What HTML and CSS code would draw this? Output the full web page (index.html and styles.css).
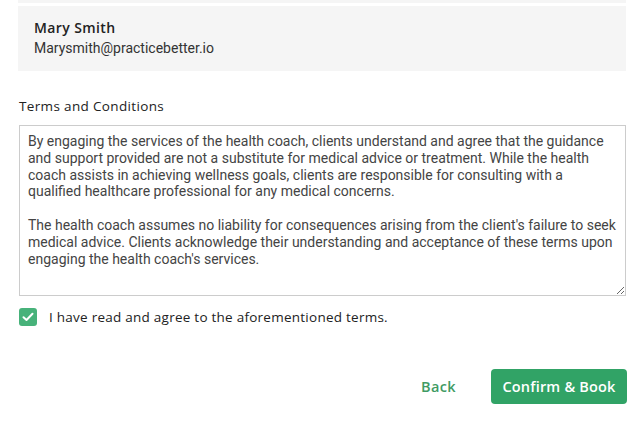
FILE: index.html
```html
<!DOCTYPE html>
<html>
<head>
<meta charset="utf-8">
<link rel="stylesheet" href="styles.css">
</head>
<body>
<div class="page">
  <div class="prev-card"></div>
  <div class="client-card">
    <div class="client-name">Mary Smith</div>
    <div class="client-email">Marysmith@practicebetter.io</div>
  </div>
  <div class="terms-label">Terms and Conditions</div>
  <textarea class="terms-box" readonly>By engaging the services of the health coach, clients understand and agree that the guidance and support provided are not a substitute for medical advice or treatment. While the health coach assists in achieving wellness goals, clients are responsible for consulting with a qualified healthcare professional for any medical concerns.

The health coach assumes no liability for consequences arising from the client's failure to seek medical advice. Clients acknowledge their understanding and acceptance of these terms upon engaging the health coach's services.</textarea>
  <label class="agree">
    <span class="check">
      <svg width="12" height="10" viewBox="0 0 12 10"><path d="M1.5 5.2 L4.5 8 L10.5 1.8" fill="none" stroke="#fff" stroke-width="2" stroke-linecap="round" stroke-linejoin="round"/></svg>
    </span>
    <span class="agree-text">I have read and agree to the aforementioned terms.</span>
  </label>
  <div class="actions">
    <button class="btn-back">Back</button>
    <button class="btn-confirm">Confirm &amp; Book</button>
  </div>
</div>
</body>
</html>
```
FILE: styles.css
```css
html, body {
  margin: 0;
  padding: 0;
  background: #ffffff;
}
.page {
  padding: 0 17px 0 18px;
  font-family: "Open Sans", "Noto Sans", sans-serif;
  color: #222;
}
.prev-card {
  height: 3px;
  background: #f5f5f5;
}
.client-card {
  margin-top: 3px;
  background: #f5f5f5;
  height: 65px;
  padding: 12px 16px 0 16px;
  box-sizing: border-box;
}
.client-name {
  font-size: 14px;
  font-weight: 600;
  color: #222;
  line-height: 20px;
  letter-spacing: 0.4px;
}
.client-email {
  font-family: Roboto, sans-serif;
  font-size: 14px;
  color: #333;
  margin-top: 2px;
  line-height: 17px;
}
.terms-label {
  margin-top: 26px;
  margin-left: 1px;
  font-size: 13.5px;
  color: #222;
  line-height: 18px;
  letter-spacing: 0.35px;
}
.terms-box {
  display: block;
  margin: 10px 0 0 1px;
  width: 607px;
  height: 171px;
  box-sizing: border-box;
  border: 1px solid #cccccc;
  border-radius: 0;
  padding: 7px 8px;
  font-family: Roboto, sans-serif;
  font-size: 14px;
  line-height: 16.8px;
  color: #444;
  resize: both;
  outline: none;
  overflow: hidden;
}
.agree {
  display: flex;
  align-items: center;
  margin-top: 12px;
  margin-left: 1px;
}
.check {
  width: 18px;
  height: 18px;
  border-radius: 3px;
  background: #47b27a;
  display: flex;
  align-items: center;
  justify-content: center;
}
.agree-text {
  margin-left: 12px;
  font-size: 13.5px;
  color: #222;
  letter-spacing: 0.25px;
}
.actions {
  display: flex;
  justify-content: flex-end;
  align-items: center;
  margin-top: 43px;
}
.btn-back {
  background: none;
  border: none;
  font-family: "Open Sans", "Noto Sans", sans-serif;
  font-size: 14.5px;
  font-weight: 600;
  letter-spacing: 0.4px;
  color: #3f9b64;
  padding: 0;
  margin-right: 35px;
}
.btn-confirm {
  background: #31a366;
  border: none;
  border-radius: 4px;
  color: #fff;
  font-family: "Open Sans", "Noto Sans", sans-serif;
  font-size: 14.5px;
  font-weight: 600;
  letter-spacing: 0.2px;
  height: 35px;
  width: 136px;
  padding: 0;
  margin-right: -1px;
}
```
